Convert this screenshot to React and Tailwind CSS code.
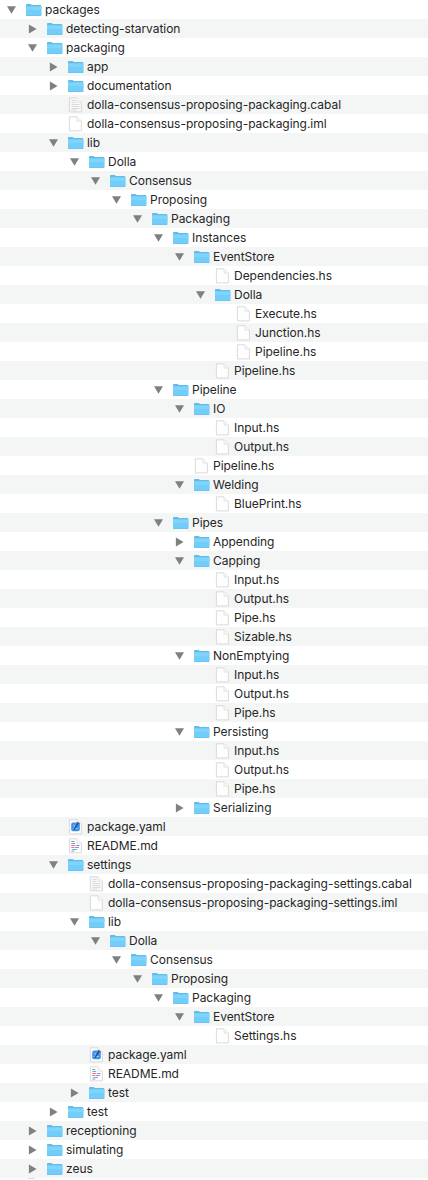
import React from "react";

const TREE = `
0 v packages
1 > detecting-starvation
1 v packaging
2 > app
2 > documentation
2 c dolla-consensus-proposing-packaging.cabal
2 f dolla-consensus-proposing-packaging.iml
2 v lib
3 v Dolla
4 v Consensus
5 v Proposing
6 v Packaging
7 v Instances
8 v EventStore
9 f Dependencies.hs
9 v Dolla
10 f Execute.hs
10 f Junction.hs
10 f Pipeline.hs
9 f Pipeline.hs
7 v Pipeline
8 v IO
9 f Input.hs
9 f Output.hs
8 f Pipeline.hs
8 v Welding
9 f BluePrint.hs
7 v Pipes
8 > Appending
8 v Capping
9 f Input.hs
9 f Output.hs
9 f Pipe.hs
9 f Sizable.hs
8 v NonEmptying
9 f Input.hs
9 f Output.hs
9 f Pipe.hs
8 v Persisting
9 f Input.hs
9 f Output.hs
9 f Pipe.hs
8 > Serializing
2 y package.yaml
2 m README.md
2 v settings
3 c dolla-consensus-proposing-packaging-settings.cabal
3 f dolla-consensus-proposing-packaging-settings.iml
3 v lib
4 v Dolla
5 v Consensus
6 v Proposing
7 v Packaging
8 v EventStore
9 f Settings.hs
3 y package.yaml
3 m README.md
3 > test
2 > test
1 > receptioning
1 > simulating
1 > zeus
`;

const rows = TREE.trim().split("\n").map((line) => {
  const [depth, kind, name] = line.split(" ");
  return { depth: Number(depth), kind, name };
});

function Disclosure({ kind }) {
  return (
    <svg width="10" height="19" viewBox="0 0 10 19" className="shrink-0">
      {kind === "v" && <path d="M0 6.2H9L4.5 13.7Z" fill="#7f8080" />}
      {kind === ">" && <path d="M.9 5.4V14.4L8.6 9.9Z" fill="#7f8080" />}
    </svg>
  );
}

function Folder() {
  return (
    <svg width="16" height="19" viewBox="0 0 16 19" className="shrink-0">
      <path d="M0 4.9Q0 4 .9 4H4.7L5.9 5.1H14.5Q15.3 5.1 15.3 5.9V15.2Q15.3 16.1 14.5 16.1H.8Q0 16.1 0 15.2Z" fill="#62bce7" />
      <path d="M0 6.5H15.3V14.8Q15.3 15.5 14.6 15.5H.7Q0 15.5 0 14.8Z" fill="#72cdf9" />
      <path d="M0 6.5H15.3V10H0Z" fill="#7ed4fb" />
    </svg>
  );
}

function FileIcon({ kind }) {
  return (
    <svg width="16" height="19" viewBox="0 0 16 19" className="shrink-0">
      <path d="M1.4 2.8H9L13.4 7.2V16.9H1.4Z" fill={kind === "c" ? "#f8f8f8" : "#fefefe"} stroke="#d2d2d2" strokeWidth=".8" strokeLinejoin="round" />
      <path d="M9 2.8V7.2H13.4" fill="#f6f6f6" stroke="#dcdcdc" strokeWidth=".6" />
      {kind === "c" && <path d="M3.5 5.5H7.5M3.5 7.5H7.5M3.5 9.5H11.5M3.5 11.5H11.5M3.5 13.5H11.5M3.5 15H8.5" stroke="#d2d2d2" strokeWidth=".8" />}
      {kind === "y" && (
        <>
          <rect x="3.2" y="5.6" width="8.6" height="8.6" rx="1.8" fill="#3a94ee" />
          <path d="M5.6 7.6L7.3 10.6M4.7 11.4H10" stroke="#9bd3ff" strokeWidth=".9" />
          <path d="M10.2 6.2L6 12.6" stroke="#2f4668" strokeWidth="1.2" />
          <path d="M8.9 5.2L11.6 6.7" stroke="#59616d" strokeWidth="1.2" />
        </>
      )}
      {kind === "m" && (
        <>
          <path d="M3.3 5.5H6.3M8.3 9.5H11.5" stroke="#7d8795" strokeWidth=".9" />
          <path d="M3.3 7.5H7.3M4.3 13.5H9" stroke="#48b9bc" strokeWidth=".9" />
          <path d="M3.3 9.5H7.3M3.3 11.5H6.3" stroke="#ed6470" strokeWidth=".9" />
          <path d="M6.8 11.5H11M3.3 15H6.3" stroke="#a36de5" strokeWidth=".9" />
        </>
      )}
    </svg>
  );
}

function Row({ depth, kind, name }) {
  const isFolder = kind === "v" || kind === ">";
  return (
    <li className="flex h-[19px] items-center even:bg-[#f4f5f5]" style={{ paddingLeft: 7 + depth * 21 }}>
      <Disclosure kind={kind} />
      <span className="ml-[9px] flex">{isFolder ? <Folder /> : <FileIcon kind={kind} />}</span>
      <span className="ml-[3px] whitespace-nowrap">{name}</span>
    </li>
  );
}

export default function App() {
  return (
    <main className="h-[1180px] w-[428px] overflow-hidden bg-white font-['Inter',sans-serif] text-[12px] leading-[19px] tracking-[-0.035px] text-[#262626]">
      <ul>
        {rows.map((row, i) => (
          <Row key={i} {...row} />
        ))}
      </ul>
      <div className="ml-[28px] h-[1px] w-[7px] bg-[#dddddd]" />
    </main>
  );
}
